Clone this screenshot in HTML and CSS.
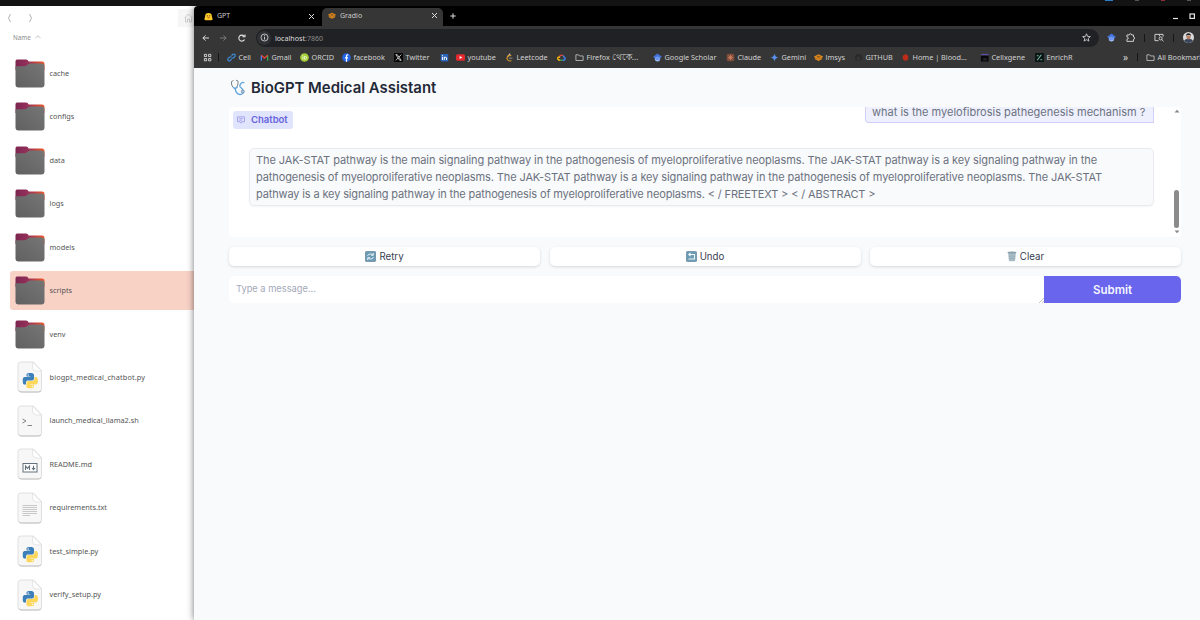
FILE: index.html
```html
<!DOCTYPE html>
<html lang="en">
<head>
    <meta charset="UTF-8">
    <meta name="viewport" content="width=device-width, initial-scale=1.0">
    <title>BioGPT Medical Assistant</title>
    <link rel="stylesheet" href="styles.css">
</head>
<body>
    <!-- shared icons -->
    <svg class="defs" width="0" height="0">
        <defs>
            <linearGradient id="tabGrad" x1="0" x2="1">
                <stop offset="0" stop-color="#7c2550"/><stop offset="0.4" stop-color="#93305a"/><stop offset="1" stop-color="#f0582a"/>
            </linearGradient>
            <linearGradient id="folderGrad" x1="0" y1="1" x2="1" y2="0">
                <stop offset="0" stop-color="#606060"/><stop offset="1" stop-color="#767676"/>
            </linearGradient>
        </defs>
        <symbol id="folder" viewBox="0 0 30 29">
            <path d="M2 .5h9q2 0 2.600 2h13.400q2.500 0 2.500 2.500v6H.5V2.500Q.5.5 2 .5z" fill="url(#tabGrad)"/>
            <path d="M.5 7.200h8.500q2 0 3.500-1.500 1.500-1.300 3.500-1.300h11q2.500 0 2.500 2.300v18.800q0 3-3 3H3.500q-3 0-3-3z" fill="url(#folderGrad)"/>
        </symbol>
        <symbol id="page" viewBox="0 0 26 32">
            <path d="M4 1h12.500L24.500 9.500V28q0 3-3 3H4q-3 0-3-3V4q0-3 3-3z" fill="#f7f7f7" stroke="#dcdcdc" stroke-width=".9"/>
            <path d="M2 29.500q.7 1.500 2.500 1.500H21q2.500 0 3.200-1.500" fill="none" stroke="#bdbdbd" stroke-width=".9"/>
            <path d="M15.500 1v5q0 4 4 4h5z" fill="#fff" stroke="#dcdcdc" stroke-width=".7"/>
        </symbol>
        <symbol id="python" viewBox="0 0 24 24">
            <path d="M11.900 0C5.800 0 6.200 2.600 6.200 2.600v2.700H12v.8H3.900S0 5.700 0 11.900s3.400 6 3.400 6h2V15s-.1-3.400 3.400-3.400h5.800s3.200 0 3.200-3.200V3.200S18.300 0 11.900 0z" fill="#3d7fb8"/>
            <path d="M12.100 24c6.100 0 5.700-2.600 5.700-2.600v-2.700H12v-.8h8.100s3.900.4 3.900-5.800-3.400-6-3.400-6h-2V9s.1 3.400-3.400 3.400H9.400s-3.200 0-3.200 3.200v5.200S5.700 24 12.100 24z" fill="#fcd75a"/>
            <circle cx="8.800" cy="3" r="1.100" fill="#fff"/><circle cx="15.200" cy="21" r="1.100" fill="#fff"/>
        </symbol>
        <symbol id="scholar" viewBox="0 0 10 10">
            <circle cx="5" cy="6.400" r="3" fill="#a8c3f5"/>
            <path d="M5 .5L9.800 4.300 8 5.800Q5 2.800 2 5.800L.2 4.300z" fill="#4472dc"/>
            <path d="M2 5.800Q5 2.600 8 5.800L7 8H3z" fill="#6e97ee"/>
        </symbol>
        <symbol id="dir" viewBox="0 0 10 10">
            <path d="M1 2h3l1 1.300h4v5H1z" fill="none" stroke="#c8c8c8" stroke-width=".9" stroke-linejoin="round"/>
        </symbol>
        <symbol id="gradio" viewBox="0 0 10 10">
            <path d="M1 4.200L5 2.200l4 2-4 2zM1 6.200l4 2 4-2" fill="#8f5a1c" stroke="#e38a1e" stroke-width="1.300"/>
        </symbol>
    </svg>

    <div class="topbar"><i class="dot blue"></i><i class="dot"></i><i class="dot red"></i><i class="dot"></i></div>
    <div class="desktop">
        <aside class="files">
            <div class="files-nav">
                <svg width="26" height="10" viewBox="0 0 26 10"><path d="M3.500 1l-2 4 2 4M22.500 1l2 4-2 4" fill="none" stroke="#aaa" stroke-width=".9"/></svg>
                <span class="home"><svg width="9" height="10" viewBox="0 0 9 10"><path d="M.5 5L4.500 1l4 4M1.500 4.500V9h2V6h2v3h2V4.500" fill="none" stroke="#c2c2c2" stroke-width=".8"/></svg></span>
            </div>
            <div class="files-head">Name <svg width="6" height="4" viewBox="0 0 6 4"><path d="M.5 3L3 .8 5.500 3" fill="none" stroke="#aaa" stroke-width=".7"/></svg></div>
            <ul class="file-list">
                <li><svg class="folder"><use href="#folder"/></svg><span>cache</span></li>
                <li><svg class="folder"><use href="#folder"/></svg><span>configs</span></li>
                <li><svg class="folder"><use href="#folder"/></svg><span>data</span></li>
                <li><svg class="folder"><use href="#folder"/></svg><span>logs</span></li>
                <li><svg class="folder"><use href="#folder"/></svg><span>models</span></li>
                <li class="selected"><svg class="folder"><use href="#folder"/></svg><span>scripts</span></li>
                <li><svg class="folder"><use href="#folder"/></svg><span>venv</span></li>
                <li><svg class="doc" viewBox="0 0 26 32"><use href="#page"/><use href="#python" x="5.500" y="12" width="15.500" height="15.500"/></svg><span class="wide">biogpt_medical_chatbot.py</span></li>
                <li><svg class="doc" viewBox="0 0 26 32"><use href="#page"/><path d="M5.500 14l3.500 2-3.500 2M10.500 20.500H15" fill="none" stroke="#777" stroke-width=".9"/></svg><span>launch_medical_llama2.sh</span></li>
                <li><svg class="doc" viewBox="0 0 26 32"><use href="#page"/><rect x="6" y="15.500" width="14" height="8.500" fill="#fff" stroke="#64727d"/><path d="M8.500 22v-4l2 2.300 2-2.300v4M16.500 17.800v3.500M15 20l1.500 1.700L18 20" fill="none" stroke="#64727d" stroke-width="1.100"/></svg><span>README.md</span></li>
                <li><svg class="doc" viewBox="0 0 26 32"><use href="#page"/><path d="M5.500 13.500H20M5.500 15.500H20M5.500 17.500H20M5.500 19.500H20M5.500 21.500H20M5.500 23.500H13" stroke="#c8c8c8" stroke-width="1.200"/></svg><span>requirements.txt</span></li>
                <li><svg class="doc" viewBox="0 0 26 32"><use href="#page"/><use href="#python" x="5.500" y="12" width="15.500" height="15.500"/></svg><span>test_simple.py</span></li>
                <li><svg class="doc" viewBox="0 0 26 32"><use href="#page"/><use href="#python" x="5.500" y="12" width="15.500" height="15.500"/></svg><span>verify_setup.py</span></li>
            </ul>
        </aside>

        <div class="browser">
            <div class="tabs">
                <div class="tab">
                    <svg width="9" height="9" viewBox="0 0 10 10"><path d="M1.200 5a3.800 3.800 0 0 1 7.600 0L9.600 8q-.4 1.600-2.500 1.200H2.900Q.8 9.600.4 8z" fill="#fbc92b"/><circle cx="3.700" cy="4.300" r=".7" fill="#4a3510"/><circle cx="6.300" cy="4.300" r=".7" fill="#4a3510"/><path d="M3.500 5.800h3L5 7.300z" fill="#bd4c1d"/></svg>
                    <span>GPT</span><b class="close"></b>
                </div>
                <div class="tab active">
                    <svg width="8" height="9" viewBox="0 0 10 10"><use href="#gradio"/></svg>
                    <span>Gradio</span><b class="close"></b>
                </div>
                <svg class="plus" width="6" height="6" viewBox="0 0 6 6"><path d="M3 .3v5.400M.3 3h5.400" stroke="#ddd"/></svg>
                <svg class="win" width="24" height="8" viewBox="0 0 24 8"><path d="M0 6.500h5" stroke="#e5e5e5" stroke-width="1.200"/><rect x="17" y="2" width="4.400" height="4.400" fill="none" stroke="#e5e5e5" stroke-width="1.200"/></svg>
            </div>
            <div class="toolbar">
                <svg width="7" height="8" viewBox="0 0 8 8"><path d="M8 4H1M4 1L1 4l3 3" fill="none" stroke="#e2e2e2" stroke-width="1.100"/></svg>
                <svg width="7" height="8" viewBox="0 0 8 8"><path d="M0 4h7M4 1l3 3-3 3" fill="none" stroke="#858585"/></svg>
                <svg width="8" height="8" viewBox="0 0 8 8"><path d="M6.500 5.500A3 3 0 1 1 6 2M4.500 2.700H7V.5" fill="none" stroke="#e2e2e2" stroke-width="1.100"/></svg>
                <div class="address">
                    <span class="info"><svg width="9" height="9" viewBox="0 0 9 9"><circle cx="4.500" cy="4.500" r="3.500" fill="none" stroke="#ccc" stroke-width=".9"/><path d="M4.500 4v2.500M4.500 2.300v1" stroke="#ccc"/></svg></span>
                    <span class="url">localhost<em>:7860</em></span>
                    <svg width="9" height="9" viewBox="0 0 10 10"><path d="M5 .9l1.200 2.900 3.100.2-2.400 2 .8 3L5 7.400 2.300 9l.8-3-2.400-2 3.100-.2z" fill="none" stroke="#ddd" stroke-width=".9"/></svg>
                </div>
                <div class="extensions">
                    <svg width="9" height="9"><use href="#scholar"/></svg>
                    <svg width="9" height="9" viewBox="0 0 10 10"><path d="M1 2.200h2.700q0-1.400 1.300-1.400t1.300 1.400h2v2.300q1.400 0 1.400 1.200T8.300 7v2.300H1V7q1.500 0 1.500-1.300T1 4.500z" fill="none" stroke="#ddd"/></svg>
                    <i></i>
                    <svg width="10" height="9" viewBox="0 0 11 10"><path d="M5 8.500H1v-7h9V4M6 1.500v2" fill="none" stroke="#ddd"/><circle cx="7.300" cy="6" r="1.700" fill="none" stroke="#ddd"/><path d="M8.500 7.200l2 2" stroke="#ddd"/></svg>
                    <i></i>
                    <svg width="11" height="11" viewBox="0 0 11 11"><circle cx="5.500" cy="5.500" r="5.500" fill="#d9d9d9"/><path d="M1 8.800q1-2 4.500-2t4.500 2Q8 11 5.500 11T1 8.800z" fill="#39455a"/><path d="M3.500 3.500h4v2.500q-2 3-4 0z" fill="#b47c60"/><path d="M3.200 4V2.500Q5.500.2 7.800 2.500V4l-1-1H4.300z" fill="#222"/></svg>
                </div>
            </div>
            <div class="bookmarks">
                <div><svg viewBox="0 0 10 10"><path d="M1.500 1.500h2.500v2.500H1.500zM6.200 1.500h2.500v2.500H6.200zM1.500 6.200h2.500v2.500H1.500zM6.200 6.200h2.500v2.500H6.200z" fill="none" stroke="#ddd"/></svg></div>
                <div class="line"></div>
                <div><svg viewBox="0 0 10 10"><path d="M5 3l1.500-1.500q1.500-.8 2.500.5.500 1.300-.5 2.200L7 5.500q-1.200.6-2 0M5 7L3.500 8.500q-1.500.8-2.500-.5-.5-1.300.5-2.200L3 4.500q1.200-.6 2 0" fill="none" stroke="#3b86d0" stroke-width="1.400"/></svg><span>Cell</span></div>
                <div><svg viewBox="0 0 10 10"><path d="M1.500 8.500V2.500" stroke="#4285f4" stroke-width="1.500"/><path d="M8.500 8.500V2.500" stroke="#34a853" stroke-width="1.500"/><path d="M1.500 2.500L5 5.500l3.500-3" fill="none" stroke="#ea4335" stroke-width="1.600"/></svg><span>Gmail</span></div>
                <div><svg viewBox="0 0 10 10"><circle cx="5" cy="5" r="4.800" fill="#a6ce39"/><path d="M3.200 3.800v3.400M4.800 3.800v3h1q1.500-.2 1.500-1.500T5.800 3.800zM3.200 2.200v.8" fill="none" stroke="#fff" stroke-width=".8"/></svg><span>ORCID</span></div>
                <div><svg viewBox="0 0 10 10"><circle cx="5" cy="5" r="4.800" fill="#2465e8"/><path d="M7 2.200q-2-.5-2 1.500v6M3.300 5.500h3.400" fill="none" stroke="#fff" stroke-width="1.300"/></svg><span>facebook</span></div>
                <div><svg viewBox="0 0 10 10"><path d="M0 0h10v10H0z" fill="#080808"/><path d="M2 1.800h1.600L8 8.200H6.400zM8 1.800L5.500 4.600M4.600 5.400L2 8.200" fill="none" stroke="#ddd" stroke-width=".9"/></svg><span>Twitter</span></div>
                <div><svg viewBox="0 0 10 10"><rect x=".8" y="1" width="8.400" height="8.400" rx=".8" fill="#2863bc"/><path d="M2.700 4.200v3.600M2.700 2.400v1M4.700 7.800V4.200M4.700 5.500q2.300-2 2.600 0v2.300" fill="none" stroke="#fff" stroke-width="1.100"/></svg></div>
                <div><svg viewBox="0 0 10 10"><rect x="0" y="1.500" width="10" height="7.200" rx="1.700" fill="#e4292f"/><path d="M4 3.300v3.500L7 5z" fill="#fff"/></svg><span>youtube</span></div>
                <div><svg viewBox="0 0 10 10"><path d="M5.800.8L2.500 4.300" stroke="#ccc" stroke-width="1.200"/><path d="M7 3.200q-2-1.500-4 .8T4 8.500q1.500 1 3-.4" fill="none" stroke="#d99526" stroke-width="1.200"/><path d="M4.300 5.700h4" stroke="#999"/></svg><span>Leetcode</span></div>
                <div><svg viewBox="0 0 10 10"><path d="M2.500 4Q4 1.500 6.800 2.800" fill="none" stroke="#ea4335" stroke-width="1.500"/><path d="M6.500 2.800Q8 4 8 4.800q1.600.8.8 2.200T6 8" fill="none" stroke="#4285f4" stroke-width="1.500"/><path d="M6 8H3.500" stroke="#34a853" stroke-width="1.500"/><path d="M3.500 8Q.8 8 .8 6T3.500 4.700" fill="none" stroke="#fbbc05" stroke-width="1.500"/></svg></div>
                <div><svg><use href="#dir"/></svg><span>Firefox <span class="bn">থেকে…</span></span></div>
                <div><svg><use href="#scholar"/></svg><span>Google Scholar</span></div>
                <div><svg viewBox="0 0 10 10"><rect x=".8" y=".8" width="8.400" height="8.400" rx="1.500" fill="#7b4a38"/><path d="M5 2v6M2 5h6M2.900 2.900l4.200 4.200M7.100 2.900L2.900 7.100" stroke="#d58969" stroke-width=".8"/></svg><span>Claude</span></div>
                <div><svg viewBox="0 0 10 10"><path d="M5 .5Q5.500 4.500 9.500 5 5.500 5.500 5 9.500 4.500 5.500.5 5 4.500 4.500 5 .5z" fill="#5591e8"/></svg><span>Gemini</span></div>
                <div><svg><use href="#gradio"/></svg><span>lmsys</span></div>
                <div><svg viewBox="0 0 10 10"><circle cx="5" cy="5" r="4" fill="#2a2a2a"/><path d="M3.500 8.500V7q-1.300-3 1.500-3t1.500 3v1.500z" fill="#363636"/></svg><span>GITHUB</span></div>
                <div><svg viewBox="0 0 10 10"><path d="M5 1.200L8 3v4L5 8.800 2 7V3z" fill="#bd2c18"/></svg><span>Home | Blood…</span></div>
                <div><svg viewBox="0 0 10 10"><path d="M1 1h8.500v1.500H1z" fill="#5a50a8"/><path d="M1 3h8.500v6.500H1z" fill="#08080c"/><path d="M3.500 5.500h4v3h-4z" fill="#222"/></svg><span>Cellxgene</span></div>
                <div><svg viewBox="0 0 10 10"><path d="M0 0h10v10H0z" fill="#0a1514"/><path d="M2 3h2M2.500 8l4.500-6M6 7.500h2" stroke="#7dbca8" stroke-width="1.200"/></svg><span>EnrichR</span></div>
                <div class="more">»</div>
                <div class="line"></div>
                <div><svg><use href="#dir"/></svg><span class="all">All Bookmarks</span></div>
            </div>

            <main class="app">
                <h1>
                    <svg width="17" height="17" viewBox="0 0 17 17"><path d="M3.500 1.500L1.500 2.500Q1 8 5 9.500 8.500 8 8 2L6 1.200" fill="none" stroke="#75838c" stroke-width="1"/><path d="M5 9.500Q6.500 15.500 10 15.500t3.200-3.500Q12.800 10 10.800 8.500T11 4.500q1.500-2 3.300-.5" fill="none" stroke="#5fa6de" stroke-width="1.300"/><circle cx="12.800" cy="12.600" r="1.600" fill="#a9c8df" stroke="#5a7890" stroke-width=".6"/><path d="M3 8.200l2.200 1.600L7.500 8" fill="none" stroke="#5fa6de" stroke-width="1.200"/></svg>
                    <span>BioGPT Medical Assistant</span>
                </h1>
                <section class="chatbot">
                    <div class="label"><svg width="8" height="8" viewBox="0 0 9 9"><path d="M.6 1h7.800v5.500H5.500L4.500 8l-1-1.500H.6zM2.500 3h4M2.500 4.700h3" fill="none" stroke="#8f8ce8" stroke-width=".8"/></svg><span>Chatbot</span></div>
                    <div class="messages">
                        <div class="msg user">what is the myelofibrosis pathegenesis mechanism ?</div>
                        <div class="msg bot">
                            <span class="l1">The JAK-STAT pathway is the main signaling pathway in the pathogenesis of myeloproliferative neoplasms. The JAK-STAT pathway is a key signaling pathway in the</span>
                            <span class="l2">pathogenesis of myeloproliferative neoplasms. The JAK-STAT pathway is a key signaling pathway in the pathogenesis of myeloproliferative neoplasms. The JAK-STAT</span>
                            <span class="l3">pathway is a key signaling pathway in the pathogenesis of myeloproliferative neoplasms. &lt; / FREETEXT &gt; &lt; / ABSTRACT &gt;</span>
                        </div>
                    </div>
                    <div class="scrollbar">
                        <svg width="6" height="4" viewBox="0 0 6 4"><path d="M.5 3.500L3 .8l2.500 2.700z" fill="#888"/></svg>
                        <div class="thumb"></div>
                        <svg width="6" height="4" viewBox="0 0 6 4"><path d="M.5.5L3 3.200 5.500.5z" fill="#888"/></svg>
                    </div>
                </section>
                <div class="actions">
                    <button><svg width="11" height="11" viewBox="0 0 11 11"><rect x=".4" y=".4" width="10.200" height="10.200" rx="1" fill="#6c9bb5" stroke="#66879c" stroke-width=".8"/><path d="M2.500 5Q3 3 5.500 3t2.500 1M8.300 2v2.300H6M8.500 6Q8 8 5.500 8T3 7M2.700 9V6.700H5" fill="none" stroke="#f2f8fb" stroke-width=".9"/></svg>Retry</button>
                    <button><svg width="11" height="11" viewBox="0 0 11 11"><rect x=".4" y=".4" width="10.200" height="10.200" rx="1" fill="#6c9bb5" stroke="#66879c" stroke-width=".8"/><path d="M3 3.500h5.500v4.500H2.500M4.500 1.800L2.800 3.500l1.700 1.700" fill="none" stroke="#f2f8fb" stroke-width="1.100"/></svg>Undo</button>
                    <button><svg width="10" height="11" viewBox="0 0 10 11"><path d="M1 1.500h8L8 10.300H2z" fill="#b4c6cf"/><path d="M2.800 3l.5 7M5 3v7M7.200 3l-.5 7M1.500 5.200h7M1.700 7.600h6.600" stroke="#87a0ac" stroke-width=".5"/><ellipse cx="5" cy="1.600" rx="4.600" ry="1.200" fill="#8aa0ad"/></svg>Clear</button>
                </div>
                <div class="composer">
                    <div class="field">
                        <textarea placeholder="Type a message..."></textarea>
                        <svg class="grip" width="5" height="5" viewBox="0 0 5 5"><path d="M0 5L5 0M3 5l2-2" stroke="#999" stroke-width=".6"/></svg>
                    </div>
                    <button class="submit">Submit</button>
                </div>
            </main>
        </div>
    </div>
</body>
</html>
```
FILE: styles.css
```css
* {
    box-sizing: border-box;
}
body {
    margin: 0;
    height: 620px;
    overflow: hidden;
    background: #fff;
    font-family: "Noto Sans", "Open Sans", sans-serif;
}
svg {
    flex: none;
    display: block;
}
.defs {
    position: absolute;
}
.topbar {
    height: 6px;
    background: #131313;
    display: flex;
    justify-content: flex-end;
    gap: 22px;
    padding-right: 9px;
    overflow: hidden;
}
.dot {
    width: 4px;
    height: 1px;
    background: #555;
}
.dot.blue {
    width: 8px;
    background: #2c7dc9;
}
.dot.red {
    background: #8b3038;
}
.desktop {
    display: flex;
    height: 614px;
}

/* file manager */
.files {
    width: 194px;
    flex: none;
    color: #555;
}
.files-nav {
    display: flex;
    justify-content: space-between;
    align-items: center;
    height: 24px;
    padding-left: 7px;
}
.home {
    width: 16px;
    height: 18px;
    padding: 4px 0 0 6px;
    background: #f6f6f6;
    overflow: hidden;
}
.files-head {
    display: flex;
    align-items: center;
    gap: 4px;
    height: 14px;
    padding-left: 13px;
    font-size: 6.2px;
    font-weight: 500;
    color: #999;
}
.file-list {
    list-style: none;
    margin: 9.7px 0 0;
    padding: 0 0 0 10px;
}
.file-list li {
    display: flex;
    align-items: center;
    height: 39px;
    margin-bottom: 4.47px;
    padding-left: 5px;
    border-radius: 3px 0 0 3px;
    font-size: 7.3px;
    white-space: nowrap;
}
.file-list span {
    padding-bottom: 1px;
}
.file-list .wide {
    letter-spacing: 0.15px;
}
.file-list .selected {
    background: #f9d2c6;
}
.folder {
    width: 30px;
    height: 29px;
    margin-right: 4.5px;
}
.doc {
    width: 26px;
    height: 32px;
    margin: 0 6.5px 0 2px;
}

/* browser window */
.browser {
    flex: 1;
    min-width: 0;
    display: flex;
    flex-direction: column;
    background: #f9fafc;
    box-shadow: 0 0 7px rgba(0, 0, 0, 0.55);
    clip-path: inset(0 0 0 -12px);
    border-radius: 4px 0 0 0;
}
.tabs {
    display: flex;
    align-items: center;
    height: 20px;
    background: #000;
    border-radius: 4px 0 0 0;
    color: #ccc;
    font-size: 7px;
}
.tab {
    display: flex;
    align-items: center;
    width: 128px;
    height: 18px;
    padding: 0 8px 0 10px;
}
.tab span {
    margin-left: 4px;
    padding-bottom: 1px;
}
.tab.active {
    width: 121px;
    height: 18px;
    align-self: flex-end;
    padding: 0 6px 3px 6px;
    background: #363636;
    border-radius: 5px 5px 0 0;
}
.close {
    margin-left: auto;
    width: 5px;
    height: 5px;
    background: linear-gradient(45deg, transparent 42%, #ddd 42%, #ddd 58%, transparent 58%), linear-gradient(-45deg, transparent 42%, #ddd 42%, #ddd 58%, transparent 58%);
}
.plus {
    margin-left: 7px;
}
.win {
    margin-left: auto;
    margin-right: 3px;
}
.toolbar {
    display: flex;
    align-items: center;
    height: 23px;
    padding: 0 8px;
    gap: 11px;
    background: #363636;
}
.address {
    flex: none;
    display: flex;
    align-items: center;
    width: 843px;
    height: 18px;
    margin-left: -1px;
    padding: 0 8px 0 1px;
    background: #202124;
    border-radius: 9px;
    font-size: 7.1px;
    color: #ddd;
}
.info {
    display: flex;
    align-items: center;
    justify-content: center;
    width: 14px;
    height: 14px;
    border-radius: 7px;
    background: #303134;
}
.url {
    flex: 1;
    margin-left: 4px;
}
.url em {
    font-style: normal;
    color: #8a8a8a;
}
.extensions {
    display: flex;
    align-items: center;
    gap: 10px;
    margin-left: -3px;
}
.extensions i,
.bookmarks .line {
    width: 1px;
    height: 8px;
    background: #161616;
}
.extensions i {
    margin: 0 -1px;
}
.bookmarks {
    display: grid;
    grid-template-columns: 15px 9px 33px 40px 42px 52px 46px 16px 49px 52px 18px 78px 73px 44px 44px 40px 47px 79px 55px 88px 14px 9px 60px;
    align-items: center;
    height: 19px;
    padding: 0 0 3px 9px;
    background: #363636;
    color: #d2d2d2;
    font-size: 7.3px;
    line-height: 10px;
    overflow: hidden;
}
.bookmarks div {
    display: flex;
    align-items: center;
    gap: 2.5px;
    height: 10px;
    white-space: nowrap;
}
.bookmarks span {
    height: 10px;
}
.bookmarks svg {
    width: 9px;
    height: 9px;
}
.bookmarks .more {
    font-size: 10px;
}
.bookmarks .bn {
    font-size: 8.5px;
    line-height: 1;
}

/* gradio app */
.app {
    padding: 0 19px 0 35px;
    font-family: Inter, sans-serif;
    color: #6b7280;
}
h1 {
    display: flex;
    align-items: center;
    gap: 4px;
    height: 39px;
    margin: 0;
    padding-left: 1px;
    font-size: 14.9px;
    font-weight: 600;
    color: #1f2937;
}
.chatbot {
    position: relative;
    height: 130px;
    background: #fff;
    border-radius: 4px;
    overflow: hidden;
}
.label {
    position: absolute;
    left: 4px;
    top: 4px;
    display: flex;
    align-items: center;
    gap: 6px;
    height: 18px;
    padding: 0 5px 1px 4px;
    background: #e0e4fd;
    border-radius: 3px;
    color: #6863dc;
    font-size: 9.5px;
    font-weight: 600;
}
.messages {
    display: flex;
    flex-direction: column;
    padding: 0 27px 0 20px;
}
.msg {
    border: 1px solid #e8eaef;
    border-radius: 5px;
    font-size: 11px;
    line-height: 16.8px;
    white-space: nowrap;
}
.msg.user {
    align-self: flex-end;
    width: 289px;
    height: 16px;
    padding: 0 6px;
    background: #eff0fe;
    border-color: #d0d0f8;
    border-top: 0;
    border-radius: 0 0 0 4px;
    line-height: 11px;
}
.msg.bot {
    height: 58px;
    margin-top: 25px;
    padding: 3px 6px;
    background: #f9fafb;
    box-shadow: 0 1px 2px rgba(0, 0, 0, 0.04);
}
.msg.bot span {
    display: block;
}
.l1 {
    letter-spacing: -0.072px;
}
.l2 {
    letter-spacing: -0.103px;
}
.l3 {
    letter-spacing: -0.138px;
}
.scrollbar {
    position: absolute;
    right: 1px;
    top: 2px;
    bottom: 3px;
    width: 6px;
    display: flex;
    flex-direction: column;
    justify-content: space-between;
}
.thumb {
    width: 5px;
    height: 38px;
    margin-top: 74px;
    border-radius: 3px;
    background: #8b8b8b;
}
.actions {
    display: grid;
    grid-template-columns: 1fr 1fr 1fr;
    gap: 9.5px;
    margin-top: 10px;
}
button {
    border: 0;
    font-family: Inter, sans-serif;
}
.actions button {
    display: flex;
    align-items: center;
    justify-content: center;
    gap: 3px;
    height: 19px;
    padding: 0;
    background: #fff;
    border-radius: 5px;
    box-shadow: 0 1px 3px rgba(0, 0, 0, 0.14);
    color: #374151;
    font-size: 9.7px;
}
.composer {
    display: flex;
    height: 27px;
    margin-top: 10px;
}
.field {
    position: relative;
    flex: 1;
}
textarea {
    display: block;
    width: 100%;
    height: 27px;
    padding: 6px 7px;
    border: 0;
    border-radius: 5px 0 0 5px;
    background: #fff;
    font: 9.3px/13px Inter, sans-serif;
    overflow: hidden;
    resize: none;
}
textarea::placeholder {
    color: #a3a9b8;
}
.grip {
    position: absolute;
    right: 0;
    bottom: 0;
}
.submit {
    width: 137px;
    background: #6965ec;
    border-radius: 0 5px 5px 0;
    color: #f5f5ff;
    font-size: 11.5px;
    font-weight: 600;
}
```
